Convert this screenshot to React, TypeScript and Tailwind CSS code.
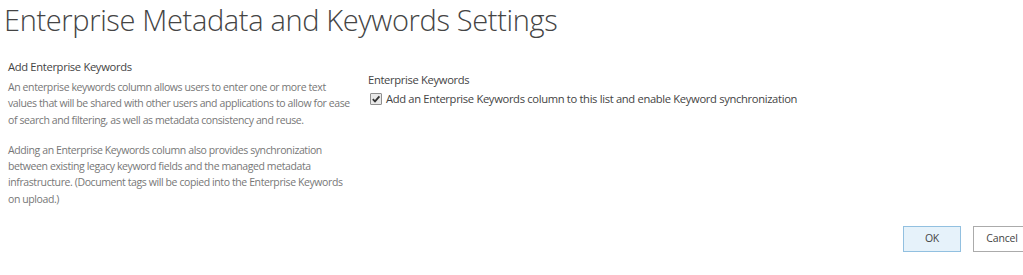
import React from "react";

export default function App() {
  const font = { fontFamily: '"Open Sans", "Noto Sans", "Liberation Sans", sans-serif' };
  return (
    <div className="w-[1023px] h-[275px] overflow-hidden bg-white" style={font}>
      <div className="w-[1031px]">
        <h1 className="pl-[4px] pt-[2px] text-[29px] leading-[36px] font-light text-[#444444] tracking-[-0.35px]">
          Enterprise Metadata and Keywords Settings
        </h1>
        <div className="flex mt-[20px]">
          <div className="w-[360px] pl-[8px]">
            <h2 className="text-[11.2px] leading-[18px] text-[#444444] tracking-[-0.33px]">Add Enterprise Keywords</h2>
            <div className="mt-[3px] text-[10.5px] leading-[16.3px] text-[#777777] tracking-[-0.4px] w-[352px] whitespace-nowrap">
              <p>
                An enterprise keywords column allows users to enter one or more text
                <br />
                values that will be shared with other users and applications to allow for ease
                <br />
                of search and filtering, as well as metadata consistency and reuse.
              </p>
              <p className="mt-[14px]">
                Adding an Enterprise Keywords column also provides synchronization
                <br />
                between existing legacy keyword fields and the managed metadata
                <br />
                infrastructure. (Document tags will be copied into the Enterprise Keywords
                <br />
                on upload.)
              </p>
            </div>
          </div>
          <div className="pl-[8px] pt-[13px]">
            <div className="text-[11.2px] leading-[18px] text-[#444444] tracking-[-0.33px]">Enterprise Keywords</div>
            <div className="flex items-center mt-[1px] text-[11.2px] leading-[18px] text-[#444444] tracking-[-0.33px]">
              <span className="w-[12px] h-[12px] ml-[2px] mr-[4px] border border-[#8f8f8f] bg-[#e9e9e9] rounded-[1px] flex items-center justify-center">
                <svg width="10" height="10" viewBox="0 0 10 10">
                  <path d="M1.8 5.2 L4 7.4 L8.4 2.4" fill="none" stroke="#333333" strokeWidth="1.8" />
                </svg>
              </span>
              Add an Enterprise Keywords column to this list and enable Keyword synchronization
            </div>
          </div>
        </div>
        <div className="flex justify-end gap-[12px] mt-[19px]">
          <button className="w-[58px] h-[26px] border border-[#92c0e0] bg-[#e6f2fa] text-[10.5px] text-[#444444] tracking-[-0.2px]">
            OK
          </button>
          <button className="w-[58px] h-[26px] border border-[#ababab] bg-white text-[10.5px] text-[#444444] tracking-[-0.2px]">
            Cancel
          </button>
        </div>
      </div>
    </div>
  );
}
